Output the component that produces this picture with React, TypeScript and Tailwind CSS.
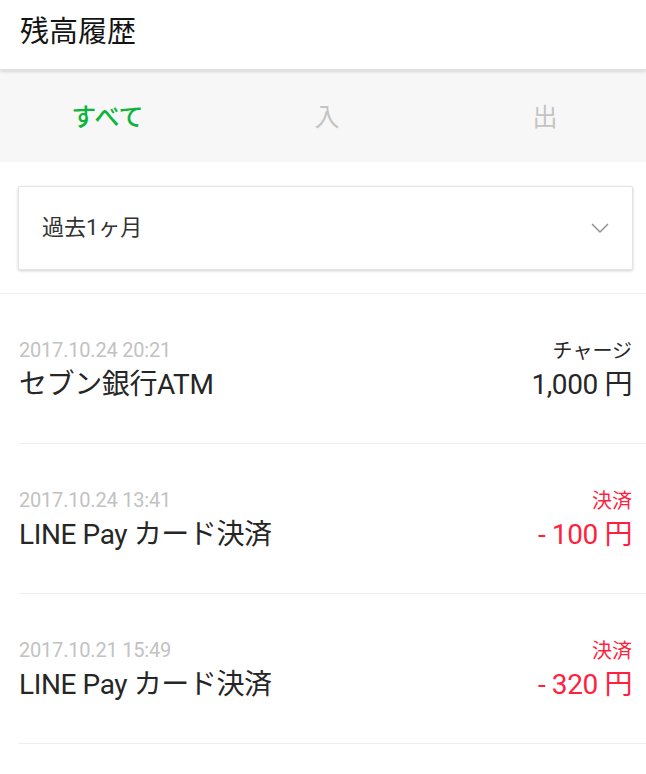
import React from "react";

const font = { fontFamily: "Roboto, 'Noto Sans CJK JP', 'Noto Sans', sans-serif" };

type Row = { date: string; title: string; label: string; amount: string; neg: boolean };

const rows: Row[] = [
  { date: "2017.10.24 20:21", title: "セブン銀行ATM", label: "チャージ", amount: "1,000 円", neg: false },
  { date: "2017.10.24 13:41", title: "LINE Pay カード決済", label: "決済", amount: "- 100 円", neg: true },
  { date: "2017.10.21 15:49", title: "LINE Pay カード決済", label: "決済", amount: "- 320 円", neg: true },
];

export default function App() {
  return (
    <div className="w-[646px] h-[774px] bg-white overflow-hidden" style={font}>
      <header className="relative z-10 h-[70px] bg-white flex items-center pl-[20px] pb-[5px] shadow-[0_2px_3px_rgba(0,0,0,0.12)] border-b border-[#e2e2e2]">
        <h1 className="text-[29px] leading-none text-[#141414] font-normal">残高履歴</h1>
      </header>

      <div className="h-[92px] bg-[#f7f7f7] overflow-hidden">
        <div className="grid grid-cols-3 w-[654px] h-full items-center text-[25px] leading-none">
          <div className="text-center text-[#0cb53a] font-medium pt-[2px] pr-[3px]">すべて</div>
          <div className="text-center text-[#c4c4c4] pt-[2px]">入</div>
          <div className="text-center text-[#c4c4c4] pt-[2px]">出</div>
        </div>
      </div>

      <div className="pt-[24px] pb-[23px] pl-[18px] pr-[13px] border-b border-[#f0f0f0]">
        <div className="h-[84px] bg-white border border-[#e4e4e4] rounded-[2px] shadow-[0_1px_3px_rgba(0,0,0,0.18)] flex items-center justify-between pl-[23px] pr-[23px]">
          <span className="text-[22px] text-[#333] leading-none">過去1ヶ月</span>
          <svg width="18" height="10" viewBox="0 0 18 10" fill="none">
            <path d="M1 1 L9 9 L17 1" stroke="#8a8a8a" strokeWidth="1.3" />
          </svg>
        </div>
      </div>

      <div className="pl-[18px]">
        {rows.map((r, i) => (
          <div key={i} className="flex justify-between pt-[42px] pb-[37px] pr-[14px] border-b border-[#efefef]">
            <div className="flex flex-col pl-px">
              <div className="h-[28px] flex items-center text-[20px] text-[#c2c2c2] tracking-[-0.2px]">{r.date}</div>
              <div className="h-[42px] flex items-center text-[28px] text-[#262626] tracking-[-0.4px]">{r.title}</div>
            </div>
            <div className="flex flex-col items-end">
              <div className={`h-[26px] flex items-center mt-[2px] text-[20px] ${r.neg ? "text-[#ff1f3f]" : "text-[#262626]"}`}>
                {r.label}
              </div>
              <div className={`h-[42px] flex items-center text-[28px] tracking-[-0.4px] ${r.neg ? "text-[#ff1f3f]" : "text-[#262626]"}`}>
                {r.amount}
              </div>
            </div>
          </div>
        ))}
      </div>
    </div>
  );
}
